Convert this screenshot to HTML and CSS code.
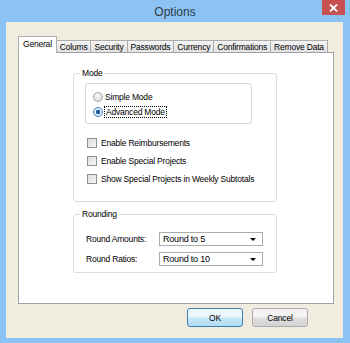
FILE: index.html
```html
<!DOCTYPE html>
<html lang="en">
<head>
  <meta charset="UTF-8">
  <title>Options</title>
  <link rel="stylesheet" href="styles.css">
</head>
<body>

<div class="window">
  <div class="titlebar">
    <span></span>
    <span class="title">Options</span>
    <button class="close">
      <svg width="9" height="8" viewBox="0 0 9 8"><path d="M1 0.5 L8 7.5 M8 0.5 L1 7.5" stroke="#fff" stroke-width="1.8"/></svg>
    </button>
  </div>

  <div class="client">
    <div class="tabs">
      <div class="tab active">General</div>
      <div class="tab">Colums</div>
      <div class="tab">Security</div>
      <div class="tab">Passwords</div>
      <div class="tab">Currency</div>
      <div class="tab">Confirmations</div>
      <div class="tab">Remove Data</div>
    </div>

    <div class="panel">
      <fieldset class="group mode">
        <legend>Mode</legend>
        <div class="radiobox">
          <label class="radio"><span class="dot"></span>Simple Mode</label>
          <label class="radio checked"><span class="dot"></span><span class="focus">Advanced Mode</span></label>
        </div>
        <label class="check first"><span class="box"></span>Enable Reimbursements</label>
        <label class="check"><span class="box"></span>Enable Special Projects</label>
        <label class="check"><span class="box"></span>Show Special Projects in Weekly Subtotals</label>
      </fieldset>

      <fieldset class="group rounding">
        <legend>Rounding</legend>
        <div class="row first">
          <span class="lbl">Round Amounts:</span>
          <div class="select">Round to 5<span class="arrow"></span></div>
        </div>
        <div class="row">
          <span class="lbl">Round Ratios:</span>
          <div class="select">Round to 10<span class="arrow"></span></div>
        </div>
      </fieldset>
    </div>

    <div class="buttons">
      <button class="btn default">OK</button>
      <button class="btn">Cancel</button>
    </div>
  </div>
</div>

</body>
</html>
```

FILE: styles.css
```css
html, body {
  margin: 0;
}
body {
  background: #8dc3f2;
  font-family: "Liberation Sans", Arial, sans-serif;
  font-size: 8.5px;
  letter-spacing: -0.2px;
  color: #000;
  width: 350px;
  height: 343px;
  overflow: hidden;
}
.window {
  width: 350px;
  height: 343px;
  display: flex;
  flex-direction: column;
}
.titlebar {
  height: 22px;
  display: grid;
  grid-template-columns: 1fr auto 1fr;
  align-items: start;
}
.title {
  font-size: 12px;
  letter-spacing: 0;
  line-height: 24px;
  color: #2e3a48;
}
.close {
  justify-self: end;
  margin-right: 5px;
  width: 23px;
  height: 15px;
  background: #c75050;
  border: none;
  padding: 0;
  display: flex;
  align-items: center;
  justify-content: center;
}
.client {
  flex: 1;
  margin: 0 7px 5px 6px;
  background: #f0ecdf;
  padding: 14px 9px 0 12px;
  display: flex;
  flex-direction: column;
}
.tabs {
  display: flex;
  align-items: flex-end;
  height: 16px;
}
.tab {
  height: 12px;
  line-height: 12px;
  box-sizing: border-box;
  padding: 0 3px;
  border: 1px solid #acacac;
  border-bottom: none;
  margin-left: -1px;
  background: linear-gradient(#f4f4f4, #e2e2e2);
  white-space: nowrap;
}
.tab.active {
  height: 17px;
  line-height: 15px;
  margin-left: 0;
  margin-bottom: -1px;
  padding: 0 4px;
  background: #fff;
  position: relative;
  z-index: 1;
}
.tab.active + .tab {
  margin-left: -1px;
}
.panel {
  height: 252px;
  box-sizing: border-box;
  border: 1px solid #9fa1a6;
  background: #fff;
  padding: 14px 0 0 54px;
}
.group {
  margin: 0;
  padding: 0;
  width: 204px;
  box-sizing: border-box;
  border: 1px solid #dcdcdc;
  border-radius: 3px;
  min-inline-size: 0;
}
.group legend {
  padding: 0 2px;
  margin-left: 6px;
  line-height: 12px;
}
.mode {
  padding-bottom: 13px;
}
.radiobox {
  margin: 4px 0 0 11px;
  width: 167px;
  height: 41px;
  box-sizing: border-box;
  border: 1px solid #d9d9d9;
  border-radius: 3px;
  padding: 5px 0 0 7px;
}
.radio {
  display: flex;
  align-items: center;
  height: 15px;
  gap: 2px;
}
.dot {
  width: 10px;
  height: 10px;
  box-sizing: border-box;
  border-radius: 50%;
  border: 1px solid #a2a2a2;
  background: radial-gradient(circle at 40% 35%, #f8f8f8, #d6d6d6);
}
.radio.checked .dot {
  border-color: #3b7cc0;
  background: radial-gradient(circle, #1e5aa8 0 2px, #dceefa 2.5px);
}
.focus {
  outline: 1px dotted #000;
  outline-offset: 0;
  padding: 0 1px;
}
.check {
  display: flex;
  align-items: center;
  height: 18px;
  margin-left: 13px;
  gap: 4px;
}
.check.first {
  margin-top: 10px;
}
.box {
  width: 10px;
  height: 10px;
  box-sizing: border-box;
  border: 1px solid #8f8f8f;
  background: linear-gradient(135deg, #dcdcdc, #f6f6f6);
}
.rounding {
  margin-top: 6px;
  padding-bottom: 6px;
}
.row {
  display: flex;
  align-items: center;
  margin-left: 12px;
  height: 14px;
  margin-top: 6px;
}
.row.first {
  margin-top: 12px;
}
.lbl {
  width: 73px;
}
.select {
  width: 104px;
  height: 14px;
  box-sizing: border-box;
  border: 1px solid #acacac;
  background: #fff;
  padding: 0 6px 0 3px;
  display: flex;
  align-items: center;
  font-size: 9px;
}
.arrow {
  margin-left: auto;
  width: 0;
  height: 0;
  border-left: 3px solid transparent;
  border-right: 3px solid transparent;
  border-top: 3px solid #000;
}
.buttons {
  display: flex;
  justify-content: flex-end;
  gap: 9px;
  margin-top: 4px;
  padding-right: 26px;
}
.btn {
  width: 56px;
  height: 19px;
  padding: 0;
  font-family: inherit;
  font-size: 8.5px;
  letter-spacing: -0.2px;
  border: 1px solid #acacac;
  border-radius: 3px;
  background: linear-gradient(#f3f3f3 45%, #dddddd 55%, #d4d4d4);
  color: #000;
}
.btn.default {
  border-color: #3c7fb1;
  background: linear-gradient(#ecf7fd 45%, #c4e6f9 55%, #b2dcf5);
}
```
